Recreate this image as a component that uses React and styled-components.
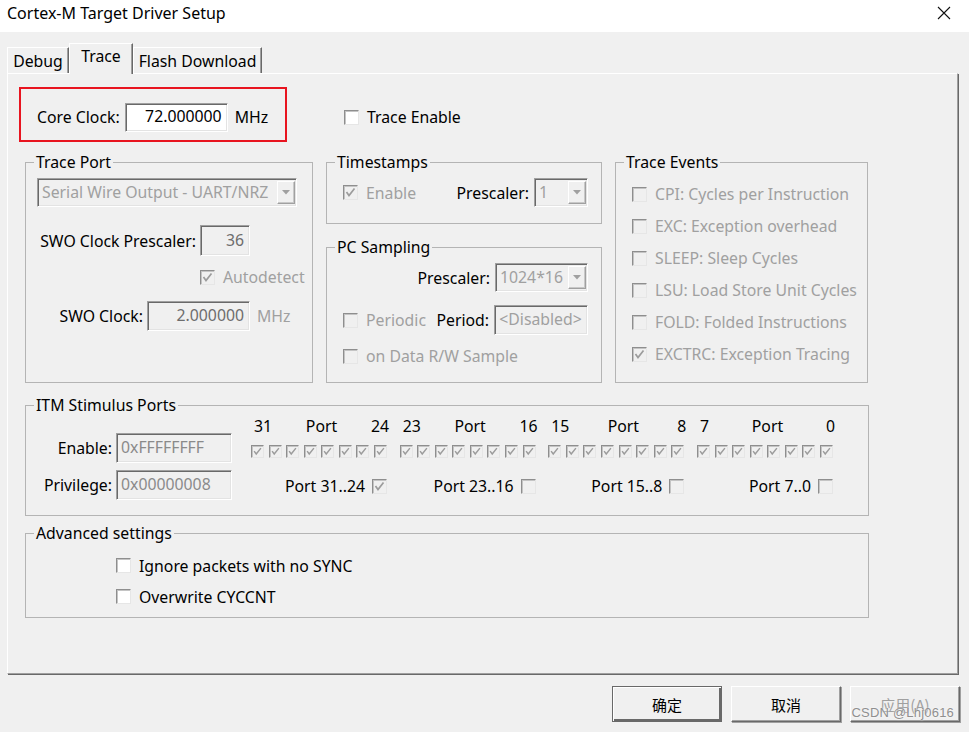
import styled, { createGlobalStyle } from "styled-components";

const GlobalStyle = createGlobalStyle`
  html, body {
    margin: 0;
    padding: 0;
    background: #f0f0f0;
  }
  body {
    font-family: "Noto Sans", "Open Sans", sans-serif;
    font-size: 15.8px;
    color: #000;
  }
`;

function Check({ checked, disabled, small }) {
  return (
    <CheckBox $small={small} $disabled={disabled}>
      {checked && (
        <svg width={small ? 11 : 13} height={small ? 11 : 13} viewBox="0 0 13 13">
          <path
            d="M2.5 6 L5 9.5 L10.5 2.5"
            fill="none"
            stroke={disabled ? "#9c9c9c" : "#000"}
            strokeWidth="1.7"
          />
        </svg>
      )}
    </CheckBox>
  );
}

function CheckItem({ checked, disabled, children }) {
  return (
    <CheckLine $disabled={disabled}>
      <Check checked={checked} disabled={disabled} />
      <span>{children}</span>
    </CheckLine>
  );
}

function Select({ w, value }) {
  return (
    <Field $w={w} $h={29} $disabled $color="#a0a0a0">
      <SelectText>{value}</SelectText>
      <DropButton>
        <svg width="8" height="5" viewBox="0 0 8 5">
          <path d="M0 0 L8 0 L4 4.5 Z" fill="#a0a0a0" />
        </svg>
      </DropButton>
    </Field>
  );
}

const portGroups = [
  { hi: "31", lo: "24", name: "Port 31..24", on: true },
  { hi: "23", lo: "16", name: "Port 23..16", on: false },
  { hi: "15", lo: "8", name: "Port 15..8", on: false },
  { hi: "7", lo: "0", name: "Port 7..0", on: false },
];

const traceEvents = [
  ["CPI: Cycles per Instruction", false],
  ["EXC: Exception overhead", false],
  ["SLEEP: Sleep Cycles", false],
  ["LSU: Load Store Unit Cycles", false],
  ["FOLD: Folded Instructions", false],
  ["EXCTRC: Exception Tracing", true],
];

export default function App() {
  return (
    <Window>
      <GlobalStyle />
      <TitleBar>
        <Title>Cortex-M Target Driver Setup</Title>
        <Close>
          <svg width="14" height="14" viewBox="0 0 14 14">
            <path d="M1 1 L13 13 M13 1 L1 13" stroke="#111" strokeWidth="1.1" />
          </svg>
        </Close>
      </TitleBar>

      <Body>
        <TabStrip>
          <Tab $w={62}>Debug</Tab>
          <Tab $w={64} $active>Trace</Tab>
          <Tab $w={129}>Flash Download</Tab>
        </TabStrip>

        <Panel>
          <TopRow>
            <ClockBox>
              <Label>Core Clock:</Label>
              <Field $w={103} $h={29} $white $align="right">
                72.000000
              </Field>
              <Unit>MHz</Unit>
            </ClockBox>
            <TraceEnable>
              <CheckItem>Trace Enable</CheckItem>
            </TraceEnable>
          </TopRow>

          <GroupArea>
            <Columns>
              <Group $w={288} $h={231}>
                <Legend>Trace Port</Legend>
                <GroupBody $pad="6px 0 0 11px">
                  <Select w={260} value="Serial Wire Output - UART/NRZ" />
                  <FormRow $top={18}>
                    <RightLabel $w={159}>SWO Clock Prescaler:</RightLabel>
                    <Field $w={50} $h={31} $disabled $align="right">
                      36
                    </Field>
                  </FormRow>
                  <FormRow $top={10} $indent={163}>
                    <CheckItem checked disabled>
                      Autodetect
                    </CheckItem>
                  </FormRow>
                  <FormRow $top={13}>
                    <RightLabel $w={106}>SWO Clock:</RightLabel>
                    <Field $w={103} $h={30} $disabled $align="right">
                      2.000000
                    </Field>
                    <Unit $muted>MHz</Unit>
                  </FormRow>
                </GroupBody>
              </Group>

              <Stack>
                <Group $w={276} $h={72}>
                  <Legend>Timestamps</Legend>
                  <GroupBody $pad="6px 13px 0 16px">
                    <SpreadRow>
                      <CheckItem checked disabled>
                        Enable
                      </CheckItem>
                      <LabeledField>
                        <Label>Prescaler:</Label>
                        <Select w={54} value="1" />
                      </LabeledField>
                    </SpreadRow>
                  </GroupBody>
                </Group>
                <Group $w={276} $h={146}>
                  <Legend>PC Sampling</Legend>
                  <GroupBody $pad="6px 13px 0 16px">
                    <EndRow>
                      <Label>Prescaler:</Label>
                      <Select w={93} value="1024*16" />
                    </EndRow>
                    <SpreadRow $top={13}>
                      <CheckItem disabled>Periodic</CheckItem>
                      <LabeledField>
                        <Label>Period:</Label>
                        <Field $w={94} $h={30} $disabled $color="#a0a0a0" $align="center">
                          &lt;Disabled&gt;
                        </Field>
                      </LabeledField>
                    </SpreadRow>
                    <FormRow $top={10}>
                      <CheckItem disabled>on Data R/W Sample</CheckItem>
                    </FormRow>
                  </GroupBody>
                </Group>
              </Stack>

              <Group $w={253} $h={231}>
                <Legend>Trace Events</Legend>
                <GroupBody $pad="6px 10px 0 16px">
                  {traceEvents.map(([text, on]) => (
                    <EventRow key={text}>
                      <CheckItem checked={on} disabled>
                        {text}
                      </CheckItem>
                    </EventRow>
                  ))}
                </GroupBody>
              </Group>
            </Columns>

            <Group $w={844} $h={121} $top={12}>
              <Legend>ITM Stimulus Ports</Legend>
              <GroupBody $pad="0 0 0 12px">
                <ItmBody>
                  <ItmFields>
                    <FieldRow>
                      <RightLabel $w={74}>Enable:</RightLabel>
                      <Field $w={116} $h={30} $disabled $color="#8a8a8a">
                        0xFFFFFFFF
                      </Field>
                    </FieldRow>
                    <FieldRow>
                      <RightLabel $w={74}>Privilege:</RightLabel>
                      <Field $w={116} $h={30} $disabled $color="#8a8a8a">
                        0x00000008
                      </Field>
                    </FieldRow>
                  </ItmFields>
                  <Ports>
                    {portGroups.map((g) => (
                      <PortGroup key={g.name}>
                        <PortHeader>
                          <span>{g.hi}</span>
                          <span>Port</span>
                          <span>{g.lo}</span>
                        </PortHeader>
                        <PortBits>
                          {Array.from({ length: 8 }).map((_, i) => (
                            <Check key={i} small checked disabled />
                          ))}
                        </PortBits>
                        <PortToggle>
                          <span>{g.name}</span>
                          <Check checked={g.on} disabled />
                        </PortToggle>
                      </PortGroup>
                    ))}
                  </Ports>
                </ItmBody>
              </GroupBody>
            </Group>

            <Group $w={844} $h={95} $top={7}>
              <Legend>Advanced settings</Legend>
              <GroupBody $pad="7px 0 0 90px">
                <OptionRow>
                  <CheckItem>Ignore packets with no SYNC</CheckItem>
                </OptionRow>
                <OptionRow>
                  <CheckItem>Overwrite CYCCNT</CheckItem>
                </OptionRow>
              </GroupBody>
            </Group>
          </GroupArea>
        </Panel>

        <ButtonRow>
          <DialogButton $default>确定</DialogButton>
          <DialogButton>取消</DialogButton>
          <DialogButton $disabled>应用(A)</DialogButton>
          <Watermark>CSDN @Lhj0616</Watermark>
        </ButtonRow>
      </Body>
    </Window>
  );
}

const Window = styled.div`
  width: 969px;
  height: 732px;
  background: #f0f0f0;
  display: flex;
  flex-direction: column;
  overflow: hidden;
`;

const TitleBar = styled.div`
  height: 32px;
  background: #fff;
  display: flex;
  align-items: center;
  justify-content: space-between;
  padding: 0 18px 0 7px;
`;

const Title = styled.div`
  font-size: 16px;
  color: #000;
  margin-top: -6px;
`;

const Close = styled.div`
  display: flex;
  margin-top: -6px;
`;

const Body = styled.div`
  flex: 1;
  padding: 11px 0 0 7px;
  display: flex;
  flex-direction: column;
`;

const TabStrip = styled.div`
  height: 30px;
  display: flex;
  align-items: flex-end;
`;

const Tab = styled.div`
  box-sizing: border-box;
  width: ${(p) => p.$w}px;
  height: ${(p) => (p.$active ? 31 : 26)}px;
  margin-bottom: ${(p) => (p.$active ? -1 : 0)}px;
  position: relative;
  z-index: ${(p) => (p.$active ? 2 : 1)};
  background: #f0f0f0;
  border: 1px solid;
  border-bottom: none;
  border-color: #fff #696969 #f0f0f0 #fff;
  box-shadow: inset -1px 0 0 #a0a0a0;
  text-align: center;
  line-height: ${(p) => (p.$active ? 24 : 27)}px;
  font-size: 15.8px;
  white-space: nowrap;
`;

const Panel = styled.div`
  box-sizing: border-box;
  width: 951px;
  height: 601px;
  border: 1px solid;
  border-color: #fff #a0a0a0 #a0a0a0 #fff;
  box-shadow: 1px 1px 0 #696969;
  padding: 13px 0 0 11px;
  display: flex;
  flex-direction: column;
`;

const TopRow = styled.div`
  display: flex;
  align-items: center;
`;

const ClockBox = styled.div`
  box-sizing: border-box;
  width: 268px;
  height: 55px;
  border: 2px solid #e8141f;
  display: flex;
  align-items: center;
  padding: 5px 0 0 16px;
`;

const TraceEnable = styled.div`
  margin-left: 57px;
  padding-top: 5px;
`;

const Label = styled.span`
  color: #000;
  margin-right: 5px;
  white-space: nowrap;
`;

const RightLabel = styled.span`
  width: ${(p) => p.$w}px;
  text-align: right;
  margin-right: 4px;
  white-space: nowrap;
`;

const Unit = styled.span`
  margin-left: 7px;
  color: ${(p) => (p.$muted ? "#a0a0a0" : "#000")};
`;

const Field = styled.div`
  box-sizing: border-box;
  width: ${(p) => p.$w}px;
  height: ${(p) => p.$h}px;
  background: ${(p) => (p.$white ? "#fff" : "#f0f0f0")};
  border: 1px solid;
  border-color: #a0a0a0 #fff #fff #a0a0a0;
  box-shadow: inset 1px 1px 0 #696969, inset -1px -1px 0 #e3e3e3;
  color: ${(p) => p.$color || (p.$disabled ? "#6d6d6d" : "#000")};
  display: flex;
  align-items: center;
  justify-content: ${(p) =>
    p.$align === "right" ? "flex-end" : p.$align === "center" ? "center" : "flex-start"};
  padding: 0 5px 2px 4px;
  white-space: nowrap;
  overflow: hidden;
`;

const SelectText = styled.span`
  flex: 1;
  overflow: hidden;
`;

const DropButton = styled.div`
  box-sizing: border-box;
  width: 18px;
  height: 23px;
  margin: 2px -4px 0 0;
  border: 1px solid;
  border-color: #fff #a0a0a0 #a0a0a0 #fff;
  box-shadow: inset -1px -1px 0 #c8c8c8;
  display: flex;
  align-items: center;
  justify-content: center;
`;

const CheckLine = styled.label`
  display: flex;
  align-items: center;
  gap: 8px;
  color: ${(p) => (p.$disabled ? "#a0a0a0" : "#000")};
  white-space: nowrap;
`;

const CheckBox = styled.span`
  box-sizing: border-box;
  flex: none;
  width: ${(p) => (p.$small ? 13 : 15)}px;
  height: ${(p) => (p.$small ? 13 : 15)}px;
  border: 1px solid;
  border-color: #8e8e8e #e6e6e6 #e6e6e6 #8e8e8e;
  box-shadow: inset 1px 1px 0 #c4c4c4;
  background: ${(p) => (p.$disabled ? "#f0f0f0" : "#fff")};
  display: flex;
  align-items: center;
  justify-content: center;
`;

const GroupArea = styled.div`
  padding: 10px 0 0 6px;
  display: flex;
  flex-direction: column;
`;

const Columns = styled.div`
  display: flex;
  gap: 13px;
`;

const Stack = styled.div`
  display: flex;
  flex-direction: column;
  gap: 13px;
`;

const Group = styled.fieldset`
  box-sizing: border-box;
  width: ${(p) => p.$w}px;
  height: ${(p) => p.$h}px;
  min-width: 0;
  margin: ${(p) => p.$top || 0}px 0 0 0;
  padding: 0;
  border: 1px solid #b4b4b4;
`;

const GroupBody = styled.div`
  padding: ${(p) => p.$pad};
`;

const Legend = styled.legend`
  margin-left: 8px;
  padding: 0 2px;
  line-height: 20px;
  font-size: 15.8px;
  color: #000;
`;

const FormRow = styled.div`
  display: flex;
  align-items: center;
  margin-top: ${(p) => p.$top || 0}px;
  padding-left: ${(p) => p.$indent || 0}px;
`;

const SpreadRow = styled.div`
  display: flex;
  align-items: center;
  justify-content: space-between;
  margin-top: ${(p) => p.$top || 0}px;
`;

const EndRow = styled.div`
  display: flex;
  align-items: center;
  justify-content: flex-end;
`;

const LabeledField = styled.div`
  display: flex;
  align-items: center;
`;

const EventRow = styled.div`
  height: 32px;
  display: flex;
  align-items: center;
`;

const ItmBody = styled.div`
  display: flex;
`;

const ItmFields = styled.div`
  padding-top: 18px;
  display: flex;
  flex-direction: column;
  gap: 7px;
`;

const FieldRow = styled.div`
  display: flex;
  align-items: center;
`;

const Ports = styled.div`
  margin-left: 19px;
  padding-top: 2px;
  display: flex;
  gap: 12.67px;
`;

const PortGroup = styled.div`
  width: 136px;
  display: flex;
  flex-direction: column;
`;

const PortHeader = styled.div`
  height: 18px;
  display: flex;
  justify-content: space-between;
  align-items: center;
  margin: 0 -2px 0 3px;
`;

const PortBits = styled.div`
  margin-top: 10px;
  display: flex;
  justify-content: space-between;
`;

const PortToggle = styled.div`
  margin-top: 17px;
  display: flex;
  justify-content: flex-end;
  align-items: center;
  gap: 7px;
  white-space: nowrap;
`;

const OptionRow = styled.div`
  height: 31px;
  display: flex;
  align-items: center;
`;

const ButtonRow = styled.div`
  position: relative;
  margin-top: 12px;
  padding-left: 605px;
  display: flex;
  gap: 9px;
`;

const DialogButton = styled.div`
  box-sizing: border-box;
  width: 110px;
  height: 36px;
  background: #f0f0f0;
  border: 1px solid;
  border-color: ${(p) => (p.$default ? "#696969" : "#fff #696969 #696969 #fff")};
  box-shadow: ${(p) =>
    p.$default
      ? "inset 1px 1px 0 #fff, inset -2px -2px 0 #696969"
      : "inset -1px -1px 0 #a0a0a0, 1px 1px 0 #a0a0a0"};
  display: flex;
  align-items: center;
  justify-content: center;
  font-family: "Noto Sans CJK SC", "Noto Sans", sans-serif;
  font-size: 15px;
  color: ${(p) => (p.$disabled ? "#a0a0a0" : "#000")};
`;

const Watermark = styled.span`
  position: absolute;
  right: 15px;
  top: 19px;
  font-family: "Liberation Sans", Arial, sans-serif;
  font-size: 13px;
  color: #8f8f8f;
  text-shadow: 0 0 2px #fff;
  letter-spacing: 0.2px;
`;
